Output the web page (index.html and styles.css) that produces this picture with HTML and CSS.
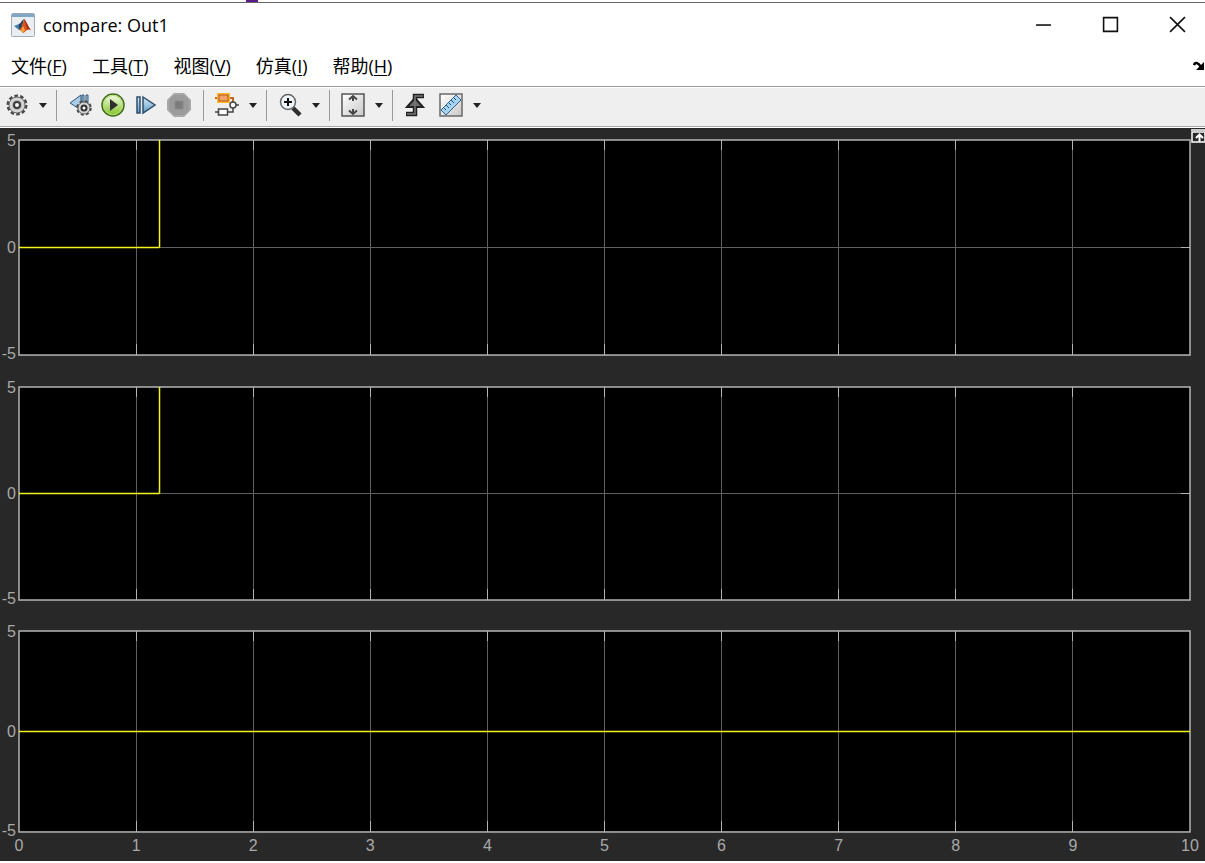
FILE: index.html
```
<!DOCTYPE html>
<html lang="zh-CN">
<head>
<meta charset="utf-8">
<title>compare: Out1</title>
<link rel="stylesheet" href="styles.css">
</head>
<body>
<div class="window">
  <header class="titlebar">
    <svg class="app-icon" viewBox="0 0 24 24" aria-hidden="true">
      <rect x="0.5" y="0.5" width="23" height="23" rx="1" fill="#e9eef2" stroke="#a3acb3"/>
      <rect x="1" y="1" width="22" height="3" fill="#7fa6c4"/>
      <path d="M3 13l5-2 3 3-3 3z" fill="#3f7fae"/>
      <path d="M8 11c2-1 3-4 5-5l-2 8-3 3z" fill="#29425e"/>
      <path d="M13 6c2 1 4 8 7 11-2-1-3-1-4 0-2 1-3 3-4 3-1-1-2-3-4-3 3-2 4-7 5-11z" fill="#d9541e"/>
      <path d="M13 6c2 1 4 8 7 11-2-1-3-1-4 0 0-4-2-7-3-11z" fill="#a52d16"/>
      <path d="M12 13l2 4-2 3-2-3z" fill="#f5a338"/>
    </svg>
    <h1 class="title">compare: Out1</h1>
    <div class="controls">
      <button class="control" aria-label="最小化"><svg viewBox="0 0 16 16"><path d="M1 8.500h14"/></svg></button>
      <button class="control" aria-label="最大化"><svg viewBox="0 0 16 16"><path d="M1.500 1.500h13v13h-13z"/></svg></button>
      <button class="control" aria-label="关闭"><svg viewBox="0 0 16 16"><path d="M1 1l14 14M15 1L1 15"/></svg></button>
    </div>
  </header>

  <nav class="menubar">
    <button class="menu">文件(<u>F</u>)</button>
    <button class="menu">工具(<u>T</u>)</button>
    <button class="menu">视图(<u>V</u>)</button>
    <button class="menu">仿真(<u>I</u>)</button>
    <button class="menu">帮助(<u>H</u>)</button>
    <button class="dock" aria-label="停靠"><svg viewBox="0 0 12 10"><path d="M1 4c1-3 4-3 7 2" fill="none" stroke="#000" stroke-width="2.500"/><path d="M11 1v8H3z"/></svg></button>
  </nav>

  <div class="toolbar" role="toolbar">
    <div class="group group-first">
      <button class="tool" aria-label="配置"><svg viewBox="0 0 26 26">
        <circle cx="13" cy="13" r="9" fill="none" stroke="#4a4a4a" stroke-width="3" stroke-dasharray="3.500 2.150"/>
        <circle cx="13" cy="13" r="8" fill="#d6d6d6" stroke="#6a6a6a"/>
        <circle cx="13" cy="13" r="5" fill="#b4b4b4"/>
        <circle cx="13" cy="13" r="3" fill="#f4f4f4" stroke="#3c3c3c" stroke-width="2"/></svg></button>
      <button class="arrow" aria-label="配置选项"><svg viewBox="0 0 8 5"><path d="M0 0h8L4 5z"/></svg></button>
    </div>
    <div class="group">
      <button class="tool" aria-label="步退"><svg viewBox="0 0 26 26">
        <path d="M3 11L14 3v15z" fill="#a9cde6" stroke="#31567a"/>
        <path d="M15 3h2v12h-2zM19 3h2v12h-2z" fill="#a9cde6" stroke="#31567a"/>
        <circle cx="17" cy="16" r="6.500" fill="none" stroke="#444" stroke-width="2.500" stroke-dasharray="2.900 2.200"/>
        <circle cx="17" cy="16" r="6" fill="#d4d4d4" stroke="#666"/>
        <circle cx="17" cy="16" r="2.500" fill="#fff" stroke="#333" stroke-width="2"/></svg></button>
      <button class="tool" aria-label="运行"><svg viewBox="0 0 26 26">
        <defs><linearGradient id="run" x2="0" y2="1"><stop stop-color="#fafff0"/><stop offset="1" stop-color="#7cc11f"/></linearGradient></defs>
        <circle cx="13" cy="13" r="11" fill="url(#run)" stroke="#44701a" stroke-width="1.500"/>
        <circle cx="13" cy="13" r="9.500" fill="none" stroke="#b9dc78"/>
        <path d="M10 7l8 6-8 6z" fill="#303030"/></svg></button>
      <button class="tool" aria-label="步进"><svg viewBox="0 0 26 26">
        <defs><linearGradient id="step" x2="0" y2="1"><stop stop-color="#d9ecf7"/><stop offset="1" stop-color="#5f9bc6"/></linearGradient></defs>
        <path d="M4 5h3v16H4zM10 5l12 8-12 8z" fill="url(#step)" stroke="#2e4e6c" stroke-width="1.500"/></svg></button>
      <button class="tool" aria-label="停止"><svg viewBox="0 0 26 26">
        <path d="M8 1h10l7 7v10l-7 7H8l-7-7V8z" fill="#a8a8a8"/>
        <path d="M8 3h10l5 5v10l-5 5H8l-5-5V8z" fill="#9b9b9b"/>
        <path d="M9 9h8v8H9z" fill="#7c7c7c" stroke="#8a8a8a"/></svg></button>
    </div>
    <div class="group">
      <button class="tool" aria-label="突出显示模块"><svg viewBox="0 0 26 26">
        <path d="M1 6h4M14 6h5v5M1 20h4M14 20h5v-4M22 13h3" fill="none" stroke="#444" stroke-width="1.500"/>
        <path d="M1 6h4M14 6h5v4" fill="none" stroke="#c7671d" stroke-width="2"/>
        <rect x="4" y="2" width="11" height="8" fill="#f39a3b" stroke="#ffb52e" stroke-width="2"/>
        <rect x="5" y="3" width="9" height="6" fill="#f0a468" stroke="#b5541a"/>
        <rect x="4.500" y="17" width="9" height="6" fill="#fff" stroke="#444" stroke-width="1.500"/>
        <circle cx="19" cy="13" r="3" fill="#fff" stroke="#444" stroke-width="1.500"/></svg></button>
      <button class="arrow" aria-label="突出显示选项"><svg viewBox="0 0 8 5"><path d="M0 0h8L4 5z"/></svg></button>
    </div>
    <div class="group">
      <button class="tool" aria-label="放大"><svg viewBox="0 0 26 26">
        <path d="M16 16l7 7" stroke="#303030" stroke-width="4.500" fill="none"/>
        <circle cx="11" cy="10" r="7.500" fill="#eef5fa" stroke="#666" stroke-width="1.500"/>
        <path d="M11 6v8M7 10h8" stroke="#111" stroke-width="2" fill="none"/></svg></button>
      <button class="arrow" aria-label="缩放选项"><svg viewBox="0 0 8 5"><path d="M0 0h8L4 5z"/></svg></button>
    </div>
    <div class="group">
      <button class="tool" aria-label="缩放坐标轴"><svg viewBox="0 0 26 26">
        <defs><linearGradient id="sheet" x2="1" y2="1"><stop stop-color="#fff"/><stop offset="1" stop-color="#c8c8c8"/></linearGradient></defs>
        <rect x="2" y="2" width="22" height="22" fill="url(#sheet)" stroke="#555" stroke-width="1.500"/>
        <path d="M13 4v5M13 17v5M9 7.500L13 4l4 3.500M9 18.500L13 22l4-3.500" fill="none" stroke="#444" stroke-width="2"/></svg></button>
      <button class="arrow" aria-label="坐标轴选项"><svg viewBox="0 0 8 5"><path d="M0 0h8L4 5z"/></svg></button>
    </div>
    <div class="group">
      <button class="tool" aria-label="触发器"><svg viewBox="0 0 26 26">
        <path d="M3 22h9V4h9" fill="none" stroke="#222" stroke-width="4.500"/>
        <path d="M4 15l8-9 8 9z" fill="#6a6a6a" stroke="#222" stroke-width="2"/>
        <path d="M4 22h8V4h8" fill="none" stroke="#777" stroke-width="1.500"/></svg></button>
      <button class="tool tool-wide" aria-label="测量"><svg viewBox="0 0 26 26">
        <rect x="2" y="2" width="22" height="22" fill="url(#sheet)" stroke="#6a6a6a" stroke-width="1.500"/>
        <path d="M3 18L18 3l5 5L8 23z" fill="#a6d3f0" stroke="#386487"/>
        <path d="M8 18l-2-2M11 16l-3-3M13 13l-2-2M16 11l-3-3M18 8l-2-2" stroke="#26506f" fill="none"/></svg></button>
      <button class="arrow" aria-label="测量选项"><svg viewBox="0 0 8 5"><path d="M0 0h8L4 5z"/></svg></button>
    </div>
  </div>

  <main class="scope">
    <svg class="defs" aria-hidden="true">
      <defs>
        <symbol id="grid" overflow="visible">
          <g class="grid-line">
            <line x1="10%" x2="10%" y2="100%"/><line x1="20%" x2="20%" y2="100%"/><line x1="30%" x2="30%" y2="100%"/>
            <line x1="40%" x2="40%" y2="100%"/><line x1="50%" x2="50%" y2="100%"/><line x1="60%" x2="60%" y2="100%"/>
            <line x1="70%" x2="70%" y2="100%"/><line x1="80%" x2="80%" y2="100%"/><line x1="90%" x2="90%" y2="100%"/>
            <line x2="100%" y1="50%" y2="50%"/>
          </g>
          <g class="tick">
            <line x1="10%" x2="10%" y2="10"/><line x1="20%" x2="20%" y2="10"/><line x1="30%" x2="30%" y2="10"/>
            <line x1="40%" x2="40%" y2="10"/><line x1="50%" x2="50%" y2="10"/><line x1="60%" x2="60%" y2="10"/>
            <line x1="70%" x2="70%" y2="10"/><line x1="80%" x2="80%" y2="10"/><line x1="90%" x2="90%" y2="10"/>
            <svg y="100%" overflow="visible">
              <line x1="10%" x2="10%" y2="-11"/><line x1="20%" x2="20%" y2="-11"/><line x1="30%" x2="30%" y2="-11"/>
              <line x1="40%" x2="40%" y2="-11"/><line x1="50%" x2="50%" y2="-11"/><line x1="60%" x2="60%" y2="-11"/>
              <line x1="70%" x2="70%" y2="-11"/><line x1="80%" x2="80%" y2="-11"/><line x1="90%" x2="90%" y2="-11"/>
            </svg>
            <svg x="100%" overflow="visible"><line x1="-9" x2="0" y1="50%" y2="50%"/></svg>
          </g>
        </symbol>
      </defs>
    </svg>
    <button class="maximize" aria-label="最大化坐标区"><svg viewBox="0 0 14 14"><path d="M0 1h14M1 3h13v10H1z" fill="none" stroke="#fff" stroke-width="1.500"/><path d="M8.500 13V6M5 9l3.500-3.500L12 9" fill="none" stroke="#fff" stroke-width="2"/></svg></button>

    <section class="row row-1">
      <div class="y-axis"><span>5</span><span>0</span><span>-5</span></div>
      <svg class="plot">
        <use href="#grid" width="100%" height="100%"/>
        <rect class="frame" width="100%" height="100%"/>
        <g class="signal"><line x2="12%" y1="50%" y2="50%"/><line x1="12%" x2="12%" y1="0" y2="50%"/></g>
      </svg>
    </section>
    <section class="row row-2">
      <div class="y-axis"><span>5</span><span>0</span><span>-5</span></div>
      <svg class="plot">
        <use href="#grid" width="100%" height="100%"/>
        <rect class="frame" width="100%" height="100%"/>
        <g class="signal"><line x2="12%" y1="50%" y2="50%"/><line x1="12%" x2="12%" y1="0" y2="50%"/></g>
      </svg>
    </section>
    <section class="row row-3">
      <div class="y-axis"><span>5</span><span>0</span><span>-5</span></div>
      <svg class="plot">
        <use href="#grid" width="100%" height="100%"/>
        <rect class="frame" width="100%" height="100%"/>
        <g class="signal"><line x2="100%" y1="50%" y2="50%"/></g>
      </svg>
    </section>
    <div class="x-axis"><span>0</span><span>1</span><span>2</span><span>3</span><span>4</span><span>5</span><span>6</span><span>7</span><span>8</span><span>9</span><span>10</span></div>
  </main>
</div>
</body>
</html>
```
FILE: styles.css
```
* { box-sizing: border-box; }

body {
  margin: 0;
  background: #fff;
  color: #000;
  font-family: "Open Sans", "Noto Sans CJK SC", sans-serif;
}

button {
  margin: 0;
  padding: 0;
  border: 0;
  background: none;
  color: inherit;
  font: inherit;
}

svg { display: block; }

.window {
  display: flex;
  flex-direction: column;
  height: 100vh;
  padding: 2px 0;
  overflow: hidden;
  background: linear-gradient(#5a1a8a, #5a1a8a) 246px 0 / 12px 2px no-repeat;
}

.titlebar {
  display: flex;
  align-items: center;
  height: 46px;
  padding: 0 19px 2px 11px;
  border-top: 1px solid #666;
}

.app-icon { width: 24px; height: 24px; }

.title {
  flex: 1;
  margin: 0 0 0 8px;
  font-size: 18px;
  font-weight: 400;
  line-height: 24px;
}

.controls { display: flex; gap: 50px; }

.control svg {
  width: 17px;
  height: 17px;
  fill: none;
  stroke: #111;
  stroke-width: 1.5;
}

.menubar {
  display: flex;
  align-items: center;
  gap: 25px;
  height: 38px;
  padding: 0 0 2px 11px;
  font-size: 18px;
  line-height: 24px;
}

.menu u { text-underline-offset: 2px; }

.dock { margin-left: auto; }

.dock svg { width: 12px; height: 10px; }

.toolbar {
  display: flex;
  align-items: center;
  height: 41px;
  padding-bottom: 3px;
  border-top: 1px solid #9a9a9a;
  border-bottom: 1px solid #a8a8a8;
  background: #efefef;
  box-shadow: inset 0 1px #fff;
}

.group {
  display: flex;
  align-items: center;
  gap: 7px;
  height: 31px;
  padding: 0 11px 0 10px;
  border-right: 1px solid #999;
}

.group-first { padding-left: 4px; }

.group:last-child { border-right: 0; }

.tool svg { width: 26px; height: 26px; }

.tool-wide { margin-left: 2px; }

.arrow {
  display: flex;
  justify-content: center;
  width: 14px;
  margin: 0 -5px 0 -1px;
}

.arrow svg { width: 8px; height: 5px; fill: #222; }

.scope {
  position: relative;
  display: flex;
  flex: 1;
  flex-direction: column;
  min-height: 0;
  margin-top: 1px;
  padding: 12px 15px 6px 0;
  background: #282828;
  color: #a9a9a9;
  font-family: "Liberation Sans", Arial, sans-serif;
  font-size: 16px;
  line-height: 18px;
}

.defs { position: absolute; width: 0; height: 0; }

.row {
  display: grid;
  grid-template-columns: 16px 1fr;
  column-gap: 3px;
  min-height: 0;
}

.row-1 { flex: 214; margin-bottom: 32px; }
.row-2 { flex: 212; margin-bottom: 31px; }
.row-3 { flex: 200; margin-bottom: 5px; }

.y-axis {
  display: flex;
  flex-direction: column;
  justify-content: space-between;
  margin: -8px 0;
  text-align: right;
}

.plot {
  width: 100%;
  height: 100%;
  background: #000;
  overflow: visible;
}

.grid-line { stroke: #606060; shape-rendering: crispEdges; }
.tick { stroke: #b4b4b4; shape-rendering: crispEdges; }
.frame { fill: none; stroke: #b4b4b4; stroke-width: 1.5; }
.signal { stroke: #f4f41c; stroke-width: 1.5; }

.x-axis {
  display: flex;
  justify-content: space-between;
  padding-left: 19px;
}

.x-axis span {
  display: flex;
  justify-content: center;
  width: 0;
}

.maximize {
  position: absolute;
  top: 1px;
  right: 0;
}

.maximize svg { width: 14px; height: 14px; }
```
